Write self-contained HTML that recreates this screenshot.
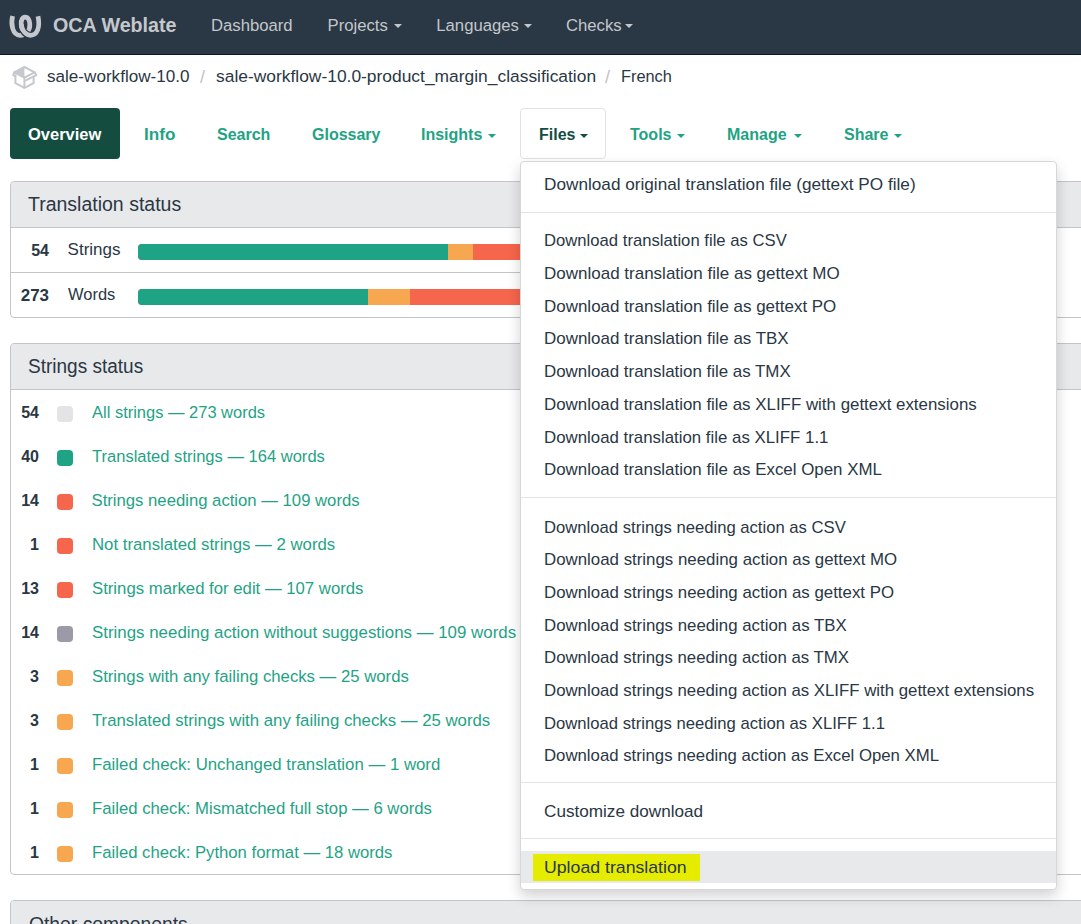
<!DOCTYPE html>
<html><head><meta charset="utf-8">
<style>
*{box-sizing:border-box;margin:0;padding:0}
html,body{width:1081px;height:924px;overflow:hidden;background:#fff}
body{font-family:"Liberation Sans",sans-serif;color:#2a3744;position:relative}
.a{position:absolute;white-space:nowrap;line-height:1}
.nav{position:absolute;left:0;top:0;width:1081px;height:55px;background:#2a3744;border-bottom:1px solid #0f1821}
.nt{color:#c3c7cc;font-size:16.7px}
.caret{position:absolute;width:0;height:0;border-left:4px solid transparent;border-right:4px solid transparent;border-top:4px solid currentColor}
.bc{font-size:17.1px;color:#2a3744}
.sep{font-size:18px;color:#bfc2c7}
.pill{position:absolute;top:108px;height:51px;border-radius:4px}
.tab{font-weight:bold;font-size:16px;color:#1fa385}
.panel{position:absolute;left:10px;width:1100px;border:1px solid #c2c5ca;border-radius:4px;background:#fff;overflow:hidden}
.ph{background:#e8e9eb;border-bottom:1px solid #c2c5ca;position:relative}
.pht{font-size:19.6px;color:#2a3744;transform-origin:0 0}
.num{font-weight:bold;font-size:16px;color:#2a3744;text-align:right}
.lbl{font-size:17px;color:#2a3744}
.lnk{font-size:16.7px;color:#1fa385}
.sq{position:absolute;left:57px;width:16px;height:16px;border-radius:4px}
.dd{position:absolute;left:520px;top:161px;width:537px;height:729px;background:#fff;border:1px solid #d6d7d9;border-radius:4px;box-shadow:0 6px 14px rgba(0,0,0,.18)}
.di{position:absolute;left:23px;transform-origin:0 0;font-size:17px;color:#2a3744}
.dv{position:absolute;left:0;width:535px;height:1px;background:#e3e4e6}
</style></head><body>
<div class="nav">
  <svg class="a" style="left:0;top:0" width="50" height="54" viewBox="0 0 50 54">
    <g fill="none" stroke-linecap="butt">
      <path stroke="#c4c7cc" stroke-width="4.7" d="M12.6 16 C10.6 24 12.5 35.3 20 35.3 C25.5 35.3 30.3 31 29.8 24 C29.4 19.5 27.5 17.2 25.1 17.2 C22.6 17.2 21 19.8 21.2 24 C21.5 27 22.3 29.5 23.5 31.3"/>
      <path stroke="#2a3744" stroke-width="7" d="M22.6 29.8 C24.5 33.2 27.5 35.3 30.5 35.3"/>
      <path stroke="#c4c7cc" stroke-width="4.7" d="M21.2 24 C21.5 30.5 26 35.3 30.5 35.3 C37.5 35.3 40.2 27 38 16.2"/>
    </g>
  </svg>
  <div class="a nt" style="left:53px;top:15px;font-size:20.6px;font-weight:bold;color:#c4c8cc;transform-origin:0 0;transform:scaleX(0.955)">OCA Weblate</div>
  <div class="a nt" style="left:211px;top:18px">Dashboard</div>
  <div class="a nt" style="left:327.5px;top:18px">Projects</div><div class="caret" style="left:394px;top:24px;color:#c3c7cc"></div>
  <div class="a nt" style="left:436.3px;top:18px">Languages</div><div class="caret" style="left:524px;top:24px;color:#c3c7cc"></div>
  <div class="a nt" style="left:566px;top:18px">Checks</div><div class="caret" style="left:625px;top:24px;color:#c3c7cc"></div>
</div>

<!-- breadcrumb -->
<svg class="a" style="left:9px;top:62px" width="32" height="32" viewBox="0 0 32 32">
  <g fill="none" stroke="#c5c8cc" stroke-width="2" stroke-linejoin="round" stroke-linecap="round">
    <path d="M15.4 5 L25.6 10.3 L15.4 15.6 L5.2 10.3 Z"/>
    <path d="M5.2 10.3 L4.2 13.2 L6.4 14.2"/>
    <path d="M6.4 13.6 L6.4 21.2 L15.4 25.8 L24.6 21.2 L24.6 15"/>
    <path d="M15.4 15.6 L15.4 25.8"/>
    <path d="M25.6 10.3 L27.3 13.2 L16.8 18.3"/>
  </g>
  <path d="M15.4 5 L5.2 10.3 L15.4 15.6 Z" fill="#c5c8cc"/>
</svg>
<div class="a bc" style="left:47px;top:68px">sale-workflow-10.0</div>
<div class="a sep" style="left:200px;top:68px">/</div>
<div class="a bc" style="left:216px;top:68px;transform-origin:0 0;transform:scaleX(1.018)">sale-workflow-10.0-product_margin_classification</div>
<div class="a sep" style="left:605px;top:68px">/</div>
<div class="a bc" style="left:620.5px;top:68px;transform-origin:0 0;transform:scaleX(0.955)">French</div>

<!-- tabs -->
<div class="pill" style="left:10px;width:110px;background:#144d3f"></div>
<div class="a tab" style="left:27.8px;top:127px;color:#fff;transform-origin:0 0;transform:scaleX(1.03)">Overview</div>
<div class="a tab" style="left:144px;top:127px;transform-origin:0 0;transform:scaleX(1.07)">Info</div>
<div class="a tab" style="left:217px;top:127px">Search</div>
<div class="a tab" style="left:312px;top:127px">Glossary</div>
<div class="a tab" style="left:421px;top:127px">Insights</div><div class="caret" style="left:488px;top:134px;color:#1fa385"></div>
<div class="pill" style="left:520px;width:86px;border:1px solid #e1e2e5"></div>
<div class="a tab" style="left:539px;top:127px;color:#144d3f">Files</div><div class="caret" style="left:580px;top:134px;color:#144d3f"></div>
<div class="a tab" style="left:630px;top:127px">Tools</div><div class="caret" style="left:677px;top:134px;color:#1fa385"></div>
<div class="a tab" style="left:727px;top:127px">Manage</div><div class="caret" style="left:794px;top:134px;color:#1fa385"></div>
<div class="a tab" style="left:844px;top:127px">Share</div><div class="caret" style="left:894px;top:134px;color:#1fa385"></div>

<!-- panel 1 -->
<div class="panel" style="top:181px;height:137px">
  <div class="ph" style="height:46px"><div class="a pht" style="left:17px;top:12.5px;transform:scaleX(0.995)">Translation status</div></div>
  <div style="position:relative;height:45px"><div style="position:absolute;left:0;top:44px;width:1030px;height:1px;background:#c2c5ca"></div>
    <div class="a num" style="left:0;width:38px;top:15px">54</div>
    <div class="a lbl" style="left:56.6px;top:13px">Strings</div>
    <div style="position:absolute;left:127px;top:16px;width:900px;height:16px;border-radius:4px;overflow:hidden;background:#f6664c">
      <div style="position:absolute;left:0;top:0;width:310px;height:16px;background:#1fa385"></div>
      <div style="position:absolute;left:310px;top:0;width:25px;height:16px;background:#f6a74f"></div>
    </div>
  </div>
  <div style="position:relative;height:45px">
    <div class="a num" style="left:0;width:38px;top:15px;transform-origin:100% 0;transform:scaleX(1.06)">273</div>
    <div class="a lbl" style="left:56.6px;top:13px;transform-origin:0 0;transform:scaleX(0.97)">Words</div>
    <div style="position:absolute;left:127px;top:16px;width:900px;height:16px;border-radius:4px;overflow:hidden;background:#f6664c">
      <div style="position:absolute;left:0;top:0;width:230px;height:16px;background:#1fa385"></div>
      <div style="position:absolute;left:230px;top:0;width:42px;height:16px;background:#f6a74f"></div>
    </div>
  </div>
</div>

<!-- panel 2 -->
<div class="panel" style="top:343px;height:532px">
  <div class="ph" style="height:46px"><div class="a pht" style="left:17px;top:13.3px;transform:scaleX(0.97)">Strings status</div></div>
</div>
<div id="list"><div class="a num" style="left:0;width:39px;top:404.9px">54</div>
<div class="sq" style="top:406.1px;background:#e3e4e6"></div>
<div class="a lnk" style="left:91.5px;top:405.4px;transform-origin:0 0;transform:scaleX(0.9874)">All strings — 273 words</div>
<div class="a num" style="left:0;width:39px;top:448.9px">40</div>
<div class="sq" style="top:450.1px;background:#1fa385"></div>
<div class="a lnk" style="left:91.5px;top:449.4px;transform-origin:0 0;transform:scaleX(0.9910)">Translated strings — 164 words</div>
<div class="a num" style="left:0;width:39px;top:492.9px">14</div>
<div class="sq" style="top:494.1px;background:#f6664c"></div>
<div class="a lnk" style="left:91.5px;top:493.4px;transform-origin:0 0;transform:scaleX(1.0000)">Strings needing action — 109 words</div>
<div class="a num" style="left:0;width:39px;top:536.9px">1</div>
<div class="sq" style="top:538.1px;background:#f6664c"></div>
<div class="a lnk" style="left:91.5px;top:537.4px;transform-origin:0 0;transform:scaleX(1.0046)">Not translated strings — 2 words</div>
<div class="a num" style="left:0;width:39px;top:580.9px">13</div>
<div class="sq" style="top:582.1px;background:#f6664c"></div>
<div class="a lnk" style="left:91.5px;top:581.4px;transform-origin:0 0;transform:scaleX(1.0022)">Strings marked for edit — 107 words</div>
<div class="a num" style="left:0;width:39px;top:624.9px">14</div>
<div class="sq" style="top:626.1px;background:#9b9aa6"></div>
<div class="a lnk" style="left:91.5px;top:625.4px;transform-origin:0 0;transform:scaleX(1.0115)">Strings needing action without suggestions — 109 words</div>
<div class="a num" style="left:0;width:39px;top:668.9px">3</div>
<div class="sq" style="top:670.1px;background:#f6a74f"></div>
<div class="a lnk" style="left:91.5px;top:669.4px;transform-origin:0 0;transform:scaleX(1.0016)">Strings with any failing checks — 25 words</div>
<div class="a num" style="left:0;width:39px;top:712.9px">3</div>
<div class="sq" style="top:714.1px;background:#f6a74f"></div>
<div class="a lnk" style="left:91.5px;top:713.4px;transform-origin:0 0;transform:scaleX(1.0046)">Translated strings with any failing checks — 25 words</div>
<div class="a num" style="left:0;width:39px;top:756.9px">1</div>
<div class="sq" style="top:758.1px;background:#f6a74f"></div>
<div class="a lnk" style="left:91.5px;top:757.4px;transform-origin:0 0;transform:scaleX(1.0067)">Failed check: Unchanged translation — 1 word</div>
<div class="a num" style="left:0;width:39px;top:800.9px">1</div>
<div class="sq" style="top:802.1px;background:#f6a74f"></div>
<div class="a lnk" style="left:91.5px;top:801.4px;transform-origin:0 0;transform:scaleX(1.0015)">Failed check: Mismatched full stop — 6 words</div>
<div class="a num" style="left:0;width:39px;top:844.9px">1</div>
<div class="sq" style="top:846.1px;background:#f6a74f"></div>
<div class="a lnk" style="left:91.5px;top:845.4px;transform-origin:0 0;transform:scaleX(0.9997)">Failed check: Python format — 18 words</div></div>

<!-- panel 3 -->
<div class="panel" style="top:900px;height:100px">
  <div class="ph" style="height:46px"><div class="a pht" style="left:18px;top:14px;transform:scaleX(0.985)">Other components</div></div>
</div>

<!-- dropdown -->
<div class="dd">
<div class="di" style="top:13.3px;transform:scaleX(1.0110)">Download original translation file (gettext PO file)</div>
<div class="dv" style="top:50px"></div>
<div class="di" style="top:69.1px;transform:scaleX(0.9805)">Download translation file as CSV</div>
<div class="di" style="top:101.8px;transform:scaleX(1.0000)">Download translation file as gettext MO</div>
<div class="di" style="top:134.6px;transform:scaleX(0.9979)">Download translation file as gettext PO</div>
<div class="di" style="top:167.3px;transform:scaleX(0.9971)">Download translation file as TBX</div>
<div class="di" style="top:200.1px;transform:scaleX(0.9939)">Download translation file as TMX</div>
<div class="di" style="top:232.8px;transform:scaleX(0.9935)">Download translation file as XLIFF with gettext extensions</div>
<div class="di" style="top:265.5px;transform:scaleX(0.9901)">Download translation file as XLIFF 1.1</div>
<div class="di" style="top:298.3px;transform:scaleX(0.9934)">Download translation file as Excel Open XML</div>
<div class="dv" style="top:335px"></div>
<div class="di" style="top:355.5px;transform:scaleX(0.9797)">Download strings needing action as CSV</div>
<div class="di" style="top:388.2px;transform:scaleX(0.9915)">Download strings needing action as gettext MO</div>
<div class="di" style="top:420.8px;transform:scaleX(0.9903)">Download strings needing action as gettext PO</div>
<div class="di" style="top:453.5px;transform:scaleX(0.9894)">Download strings needing action as TBX</div>
<div class="di" style="top:486.2px;transform:scaleX(0.9879)">Download strings needing action as TMX</div>
<div class="di" style="top:518.9px;transform:scaleX(0.9879)">Download strings needing action as XLIFF with gettext extensions</div>
<div class="di" style="top:551.5px;transform:scaleX(0.9805)">Download strings needing action as XLIFF 1.1</div>
<div class="di" style="top:584.2px;transform:scaleX(0.9860)">Download strings needing action as Excel Open XML</div>
<div class="dv" style="top:620px"></div>
<div class="di" style="top:640.3px;transform:scaleX(1.0083)">Customize download</div>
<div class="dv" style="top:676px"></div>
<div style="position:absolute;left:0;top:689px;width:535px;height:32px;background:#e8e9eb"></div>
<div style="position:absolute;left:12px;top:692px;width:167px;height:27px;background:#e5ec00"></div>
<div class="di" style="top:696.2px;transform:scaleX(1.0410)">Upload translation</div>
</div>
</body></html>
